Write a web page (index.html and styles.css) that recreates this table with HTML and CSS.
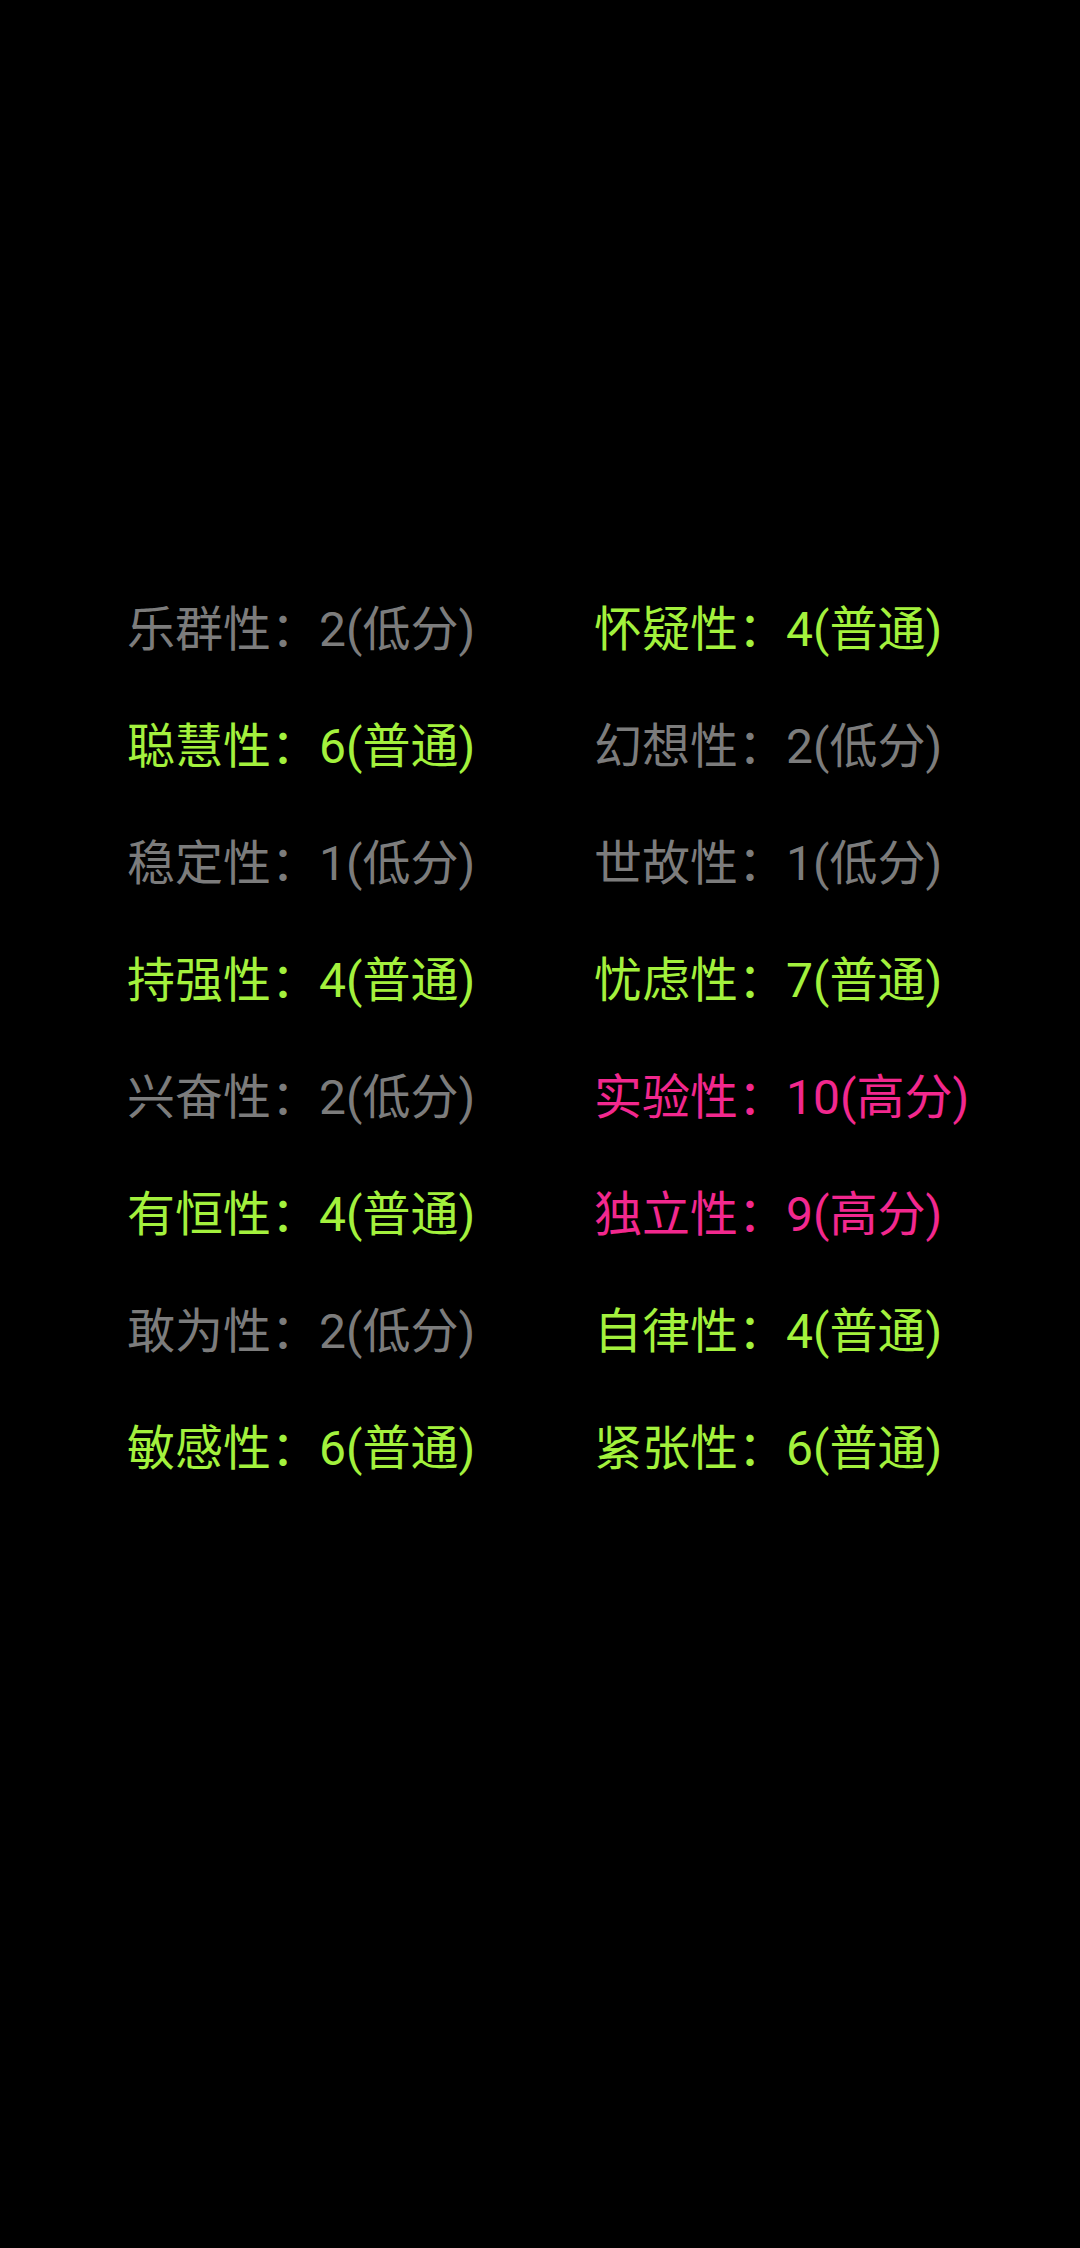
FILE: index.html
```html
<!DOCTYPE html>
<html lang="zh-CN">
<head>
<meta charset="utf-8">
<link rel="stylesheet" href="styles.css">
</head>
<body>
<div class="grid">
  <div class="item low">乐群性：2(低分)</div>
  <div class="item mid">怀疑性：4(普通)</div>
  <div class="item mid">聪慧性：6(普通)</div>
  <div class="item low">幻想性：2(低分)</div>
  <div class="item low">稳定性：1(低分)</div>
  <div class="item low">世故性：1(低分)</div>
  <div class="item mid">持强性：4(普通)</div>
  <div class="item mid">忧虑性：7(普通)</div>
  <div class="item low">兴奋性：2(低分)</div>
  <div class="item high">实验性：10(高分)</div>
  <div class="item mid">有恒性：4(普通)</div>
  <div class="item high">独立性：9(高分)</div>
  <div class="item low">敢为性：2(低分)</div>
  <div class="item mid">自律性：4(普通)</div>
  <div class="item mid">敏感性：6(普通)</div>
  <div class="item mid">紧张性：6(普通)</div>
</div>
</body>
</html>
```
FILE: styles.css
```css
html, body {
  margin: 0;
  padding: 0;
  background: #000;
}
body {
  width: 1080px;
  height: 2248px;
  overflow: hidden;
  font-family: Roboto, "Noto Sans CJK SC", sans-serif;
}
.grid {
  display: grid;
  grid-template-columns: 467px 467px;
  padding: 571px 0 0 127px;
}
.item {
  font-size: 48px;
  line-height: 117px;
  height: 117px;
  white-space: nowrap;
}
.low { color: #7c7c7c; }
.mid { color: #a3f13d; }
.high { color: #f2288e; }
```
